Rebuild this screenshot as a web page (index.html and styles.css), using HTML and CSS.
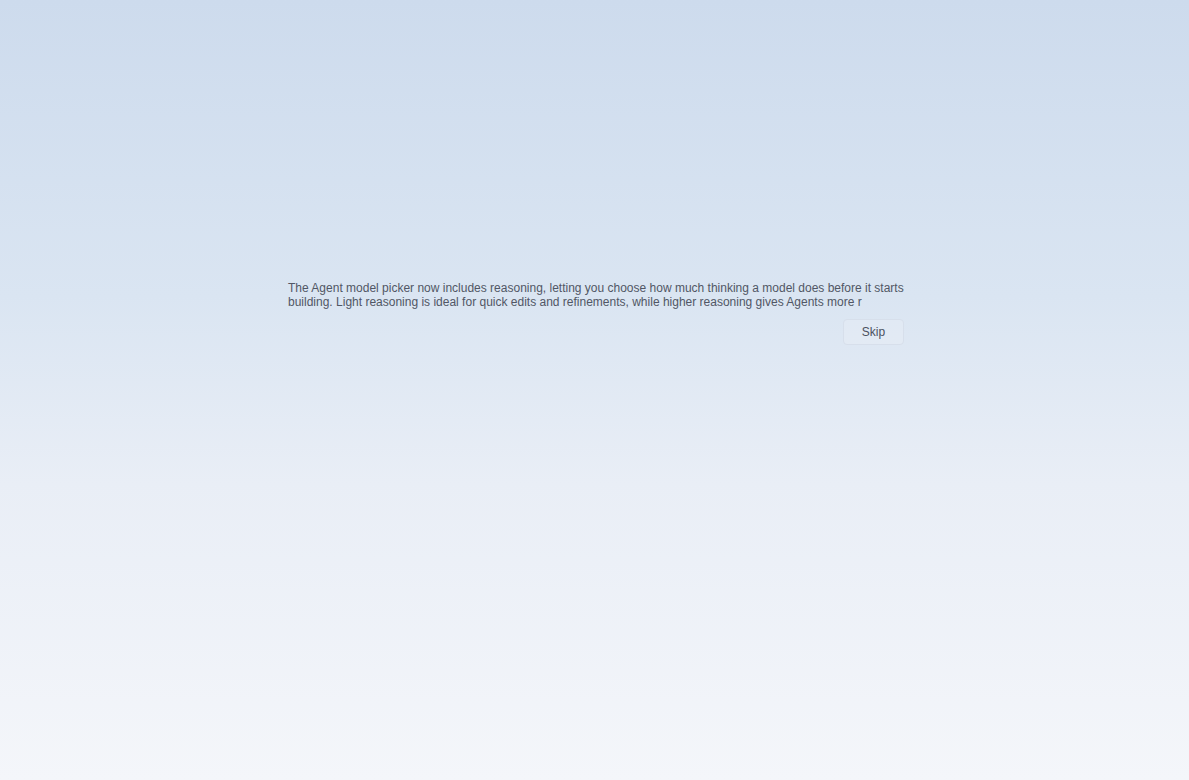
FILE: index.html
```html
<!DOCTYPE html>
<html lang="en">
<head>
    <meta charset="UTF-8">
    <meta name="viewport" content="width=device-width, initial-scale=1.0">
    <title>What's new</title>
    <link rel="stylesheet" href="styles.css">
</head>
<body>

    <div class="intro">
        <p class="intro-text">The Agent model picker now includes reasoning, letting you choose how much thinking a model does before it starts building. Light reasoning is ideal for quick edits and refinements, while higher reasoning gives Agents more r</p>

        <div class="intro-actions">
            <button class="skip-btn">Skip</button>
        </div>
    </div>

</body>
</html>
```

FILE: styles.css
```css
html {
    height: 100%;
}

body {
    margin: 0;
    min-height: 100%;
    font-family: "Liberation Sans", Arial, sans-serif;
    background: linear-gradient(180deg, #cddbed 0%, #dae5f2 38%, #e9eef6 62%, #f4f6fa 100%);
    background-attachment: fixed;
}

.intro {
    width: 616px;
    margin: 0 auto;
    padding: 281px 0 0 3px;
}

.intro-text {
    margin: 0;
    font-size: 12px;
    line-height: 14px;
    color: #515765;
}

.intro-actions {
    display: flex;
    justify-content: flex-end;
    margin-top: 10px;
}

.skip-btn {
    width: 61px;
    height: 26px;
    font-family: inherit;
    font-size: 12px;
    color: #4b5160;
    background-color: rgba(255, 255, 255, 0.15);
    border: 1px solid #d7dfeb;
    border-radius: 4px;
    cursor: pointer;
}

.skip-btn:hover {
    background-color: rgba(255, 255, 255, 0.5);
}
```
